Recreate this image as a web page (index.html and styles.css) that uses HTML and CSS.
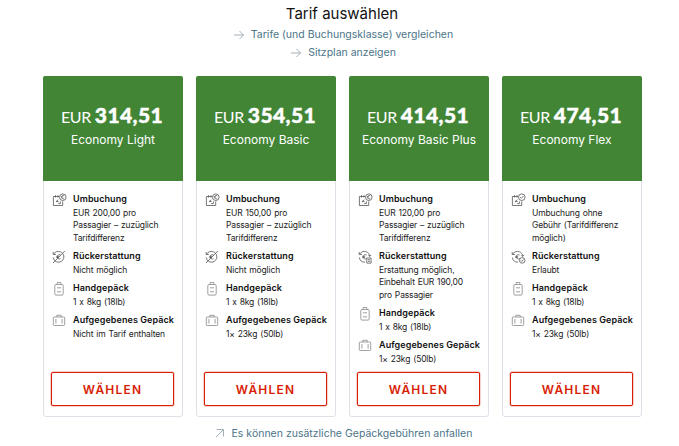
FILE: index.html
```html
<!DOCTYPE html>
<html lang="de">

<head>
    <meta charset="UTF-8">
    <meta name="viewport" content="width=device-width, initial-scale=1.0">
    <title>Tarif auswählen</title>
    <link rel="stylesheet" href="styles.css">
</head>

<body>
    <svg class="sprite" xmlns="http://www.w3.org/2000/svg">
        <symbol id="arrow" viewBox="0 0 12 12">
            <path d="M1 6h9.5M6.5 2l4 4-4 4" />
        </symbol>
        <symbol id="external" viewBox="0 0 12 12">
            <path d="M2 9l7-7M2.5 1.5h7v7" />
        </symbol>
        <symbol id="calendar" viewBox="0 0 15 14">
            <path d="M7 3.5H1.4v9h9.3V8.4M3.5 2.2v2.3M6 2.2v2.3M6.3 6.8L4 8.6h2.6M6.2 10.6h2.2V8.4" />
        </symbol>
        <symbol id="rebook" viewBox="0 0 15 14">
            <use href="#calendar" />
            <circle cx="10.8" cy="4.2" r="3.3" />
            <path d="M12.2 2.8c-1.4-.8-2.6.1-2.6 1.4s1.2 2.2 2.6 1.4M8.9 3.9h2.2" />
        </symbol>
        <symbol id="rebook-free" viewBox="0 0 15 14">
            <use href="#calendar" />
            <circle cx="10.8" cy="4.2" r="3.3" />
            <path d="M9.2 4.1l1.2 1.2 2-2.2" />
        </symbol>
        <symbol id="cycle" viewBox="0 0 15 14">
            <path d="M1.2 4.5V2M1.2 4.5h2.6M1.6 4.3C3 1.6 6 .9 8.4 1.8c1.9.7 3.1 2.3 3.4 4.2M1.3 7.5c.4 3 2.6 4.8 5.7 4.7M8.6 5C7 4 5.4 5 5.4 6.8S7 9.6 8.6 8.7M4.2 6.3h3M4.2 7.6h2.6" />
        </symbol>
        <symbol id="refund-none" viewBox="0 0 15 14">
            <use href="#cycle" />
            <path d="M1 13L12.8 1M11.9 6c.2 3.5-1.8 5.7-4.9 6.2" />
        </symbol>
        <symbol id="refund-fee" viewBox="0 0 15 14">
            <use href="#cycle" />
            <path d="M8.8 8h4.3v5.1H8.8zM10 9.7h2M10 11.3h2M10.3 5.2l1.5 1.3 1.3-1.6" />
        </symbol>
        <symbol id="refund-ok" viewBox="0 0 15 14">
            <use href="#cycle" />
            <circle cx="11.2" cy="10.4" r="2.8" />
            <path d="M9.9 10.4l1 1 1.6-1.9M10.3 5.2l1.5 1.3 1.3-1.6" />
        </symbol>
        <symbol id="cabin-bag" viewBox="0 0 15 14">
            <path d="M5.2 2.5v-2h3.6v2M4 2.5h6c.8 0 1.2.5 1.2 1.2v8c0 .9-.4 1.4-1.2 1.4H4c-.8 0-1.2-.5-1.2-1.4v-8C2.8 3 3.2 2.5 4 2.5zM5 5.8h4M5 9.8h4" />
        </symbol>
        <symbol id="suitcase" viewBox="0 0 15 14">
            <path d="M4.8 3V1.3h4.4V3M2.2 3h9.6c.6 0 .9.3.9.9v6.7c0 .6-.3.9-.9.9H2.2c-.6 0-.9-.3-.9-.9V3.9c0-.6.3-.9.9-.9zM3.9 5v4.6M10.1 5v4.6" />
        </symbol>
    </svg>

    <header class="intro">
        <h1>Tarif auswählen</h1>
        <a class="link" href="#"><svg><use href="#arrow" /></svg><span>Tarife (und Buchungsklasse) vergleichen</span></a>
        <a class="link" href="#"><svg><use href="#arrow" /></svg><span>Sitzplan anzeigen</span></a>
    </header>

    <main class="fares">
        <section class="fare">
            <div class="fare-head">
                <div class="price">EUR <strong>314,51</strong></div>
                <div class="name">Economy Light</div>
            </div>
            <ul>
                <li><svg><use href="#rebook" /></svg><h3>Umbuchung</h3><p>EUR 200,00 pro<br>Passagier – zuzüglich<br>Tarifdifferenz</p></li>
                <li><svg><use href="#refund-none" /></svg><h3>Rückerstattung</h3><p>Nicht möglich</p></li>
                <li><svg class="bag"><use href="#cabin-bag" /></svg><h3>Handgepäck</h3><p>1 x 8kg (18lb)</p></li>
                <li><svg class="bag"><use href="#suitcase" /></svg><h3>Aufgegebenes Gepäck</h3><p>Nicht im Tarif enthalten</p></li>
            </ul>
            <button>WÄHLEN</button>
        </section>

        <section class="fare">
            <div class="fare-head">
                <div class="price">EUR <strong>354,51</strong></div>
                <div class="name">Economy Basic</div>
            </div>
            <ul>
                <li><svg><use href="#rebook" /></svg><h3>Umbuchung</h3><p>EUR 150,00 pro<br>Passagier – zuzüglich<br>Tarifdifferenz</p></li>
                <li><svg><use href="#refund-none" /></svg><h3>Rückerstattung</h3><p>Nicht möglich</p></li>
                <li><svg class="bag"><use href="#cabin-bag" /></svg><h3>Handgepäck</h3><p>1 x 8kg (18lb)</p></li>
                <li><svg class="bag"><use href="#suitcase" /></svg><h3>Aufgegebenes Gepäck</h3><p>1× 23kg (50lb)</p></li>
            </ul>
            <button>WÄHLEN</button>
        </section>

        <section class="fare">
            <div class="fare-head">
                <div class="price">EUR <strong>414,51</strong></div>
                <div class="name">Economy Basic Plus</div>
            </div>
            <ul>
                <li><svg><use href="#rebook" /></svg><h3>Umbuchung</h3><p>EUR 120,00 pro<br>Passagier – zuzüglich<br>Tarifdifferenz</p></li>
                <li><svg><use href="#refund-fee" /></svg><h3>Rückerstattung</h3><p>Erstattung möglich,<br>Einbehalt EUR 190,00<br>pro Passagier</p></li>
                <li><svg class="bag"><use href="#cabin-bag" /></svg><h3>Handgepäck</h3><p>1 x 8kg (18lb)</p></li>
                <li><svg class="bag"><use href="#suitcase" /></svg><h3>Aufgegebenes Gepäck</h3><p>1× 23kg (50lb)</p></li>
            </ul>
            <button>WÄHLEN</button>
        </section>

        <section class="fare">
            <div class="fare-head">
                <div class="price">EUR <strong>474,51</strong></div>
                <div class="name">Economy Flex</div>
            </div>
            <ul>
                <li><svg><use href="#rebook-free" /></svg><h3>Umbuchung</h3><p>Umbuchung ohne<br>Gebühr (Tarifdifferenz<br>möglich)</p></li>
                <li><svg><use href="#refund-ok" /></svg><h3>Rückerstattung</h3><p>Erlaubt</p></li>
                <li><svg class="bag"><use href="#cabin-bag" /></svg><h3>Handgepäck</h3><p>1 x 8kg (18lb)</p></li>
                <li><svg class="bag"><use href="#suitcase" /></svg><h3>Aufgegebenes Gepäck</h3><p>1× 23kg (50lb)</p></li>
            </ul>
            <button>WÄHLEN</button>
        </section>
    </main>

    <footer>
        <a class="link" href="#"><svg><use href="#external" /></svg><span>Es können zusätzliche Gepäckgebühren anfallen</span></a>
    </footer>
</body>

</html>
```
FILE: styles.css
```css
* {
    margin: 0;
    padding: 0;
    box-sizing: border-box;
}

body {
    width: 679px;
    height: 446px;
    overflow: hidden;
    background: #fff;
    color: #111;
    font-family: Inter, "Liberation Sans", sans-serif;
    font-feature-settings: "calt" 0;
}

svg {
    fill: none;
    stroke: #555;
    stroke-width: 0.8;
}

.sprite {
    display: none;
}

.intro {
    display: flex;
    flex-direction: column;
    align-items: center;
    height: 76px;
    padding: 3px 0 0 7px;
}

h1 {
    margin: 0 2px 1px 0;
    font-size: 15px;
    font-weight: 400;
    line-height: 22px;
}

.link {
    display: flex;
    align-items: center;
    gap: 6px;
    height: 18px;
    color: #4b7488;
    font-size: 10.5px;
    line-height: 18px;
    text-decoration: none;
    white-space: nowrap;
}

.link svg {
    width: 12px;
    height: 12px;
    stroke: #8b9ba4;
}

.fares {
    display: grid;
    grid-template-columns: repeat(4, 140px);
    gap: 13px;
    height: 341px;
    margin-left: 43px;
}

.fare {
    display: flex;
    flex-direction: column;
    border: 1px solid #dfe1e8;
    border-radius: 3px;
}

.fare-head {
    height: 105px;
    margin: -1px -1px 0;
    padding-top: 25px;
    border-radius: 2px 2px 0 0;
    background: #418535;
    color: #fff;
    text-align: center;
    white-space: nowrap;
}

.price {
    margin-right: 2px;
    font-family: Lato, Inter, sans-serif;
    font-size: 16px;
    line-height: 27px;
    letter-spacing: -0.3px;
}

.price strong {
    font-size: 21px;
    font-weight: 900;
    letter-spacing: 0.4px;
    -webkit-text-stroke: 0.4px #fff;
}

.name {
    font-size: 12px;
    line-height: 20px;
}

ul {
    flex: 1;
    display: flex;
    flex-direction: column;
    gap: 6px;
    padding: 11px 0 0 8px;
    list-style: none;
}

li {
    display: grid;
    grid-template-columns: 15px 1fr;
    grid-template-rows: 14.5px auto;
    column-gap: 6px;
    align-items: start;
    margin-bottom: -1px;
    white-space: nowrap;
}

li svg {
    grid-row: 1 / 3;
    width: 15px;
    height: 14px;
    margin-top: 1px;
}

li svg.bag {
    stroke: #888;
}

h3 {
    font-size: 9px;
    font-weight: 600;
    line-height: 14px;
    letter-spacing: 0.08px;
}

p {
    grid-column: 2;
    font-size: 8.5px;
    line-height: 12.5px;
    letter-spacing: -0.15px;
    word-spacing: 0.7px;
    color: #222;
}

button {
    height: 34px;
    margin: 0 8px 10px 7px;
    border: 1px solid #d81e05;
    border-radius: 2px;
    background: #fff;
    box-shadow: 0 0 0 0.5px rgba(216, 30, 5, 0.4);
    color: #d81e05;
    font: 600 12px Inter, sans-serif;
    letter-spacing: 1.2px;
}

footer {
    display: flex;
    justify-content: center;
    padding: 8px 0 0 7px;
}
```
